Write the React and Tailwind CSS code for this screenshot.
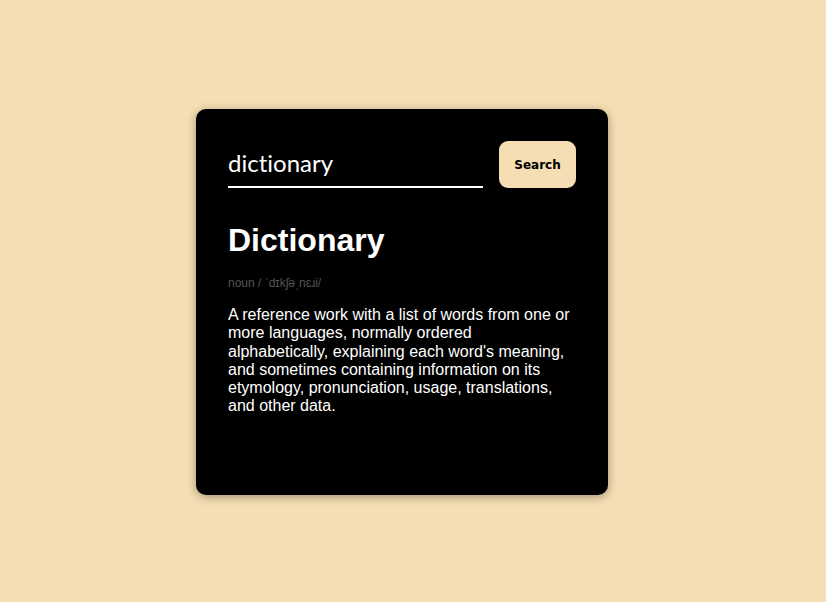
import { useState } from "react";

export default function App() {
  const [word, setWord] = useState("dictionary");

  return (
    <div className="min-h-screen w-full bg-[#f5deb3] flex items-center justify-center pr-[22px] pt-[2px]">
      <div className="w-[412px] h-[386px] bg-black rounded-[10px] shadow-[0_2px_10px_rgba(0,0,0,0.35)] px-8 pt-8">
        <div className="flex items-start gap-4">
          <input
            value={word}
            onChange={(e) => setWord(e.target.value)}
            className="w-[255px] h-[47px] bg-transparent text-white text-[24px] font-['Lato',sans-serif] [font-variant-ligatures:none] border-b-2 border-white outline-none pb-0.5"
          />
          <button className="w-[77px] h-[47px] rounded-[9px] bg-[#f5deb3] text-black text-[12px] font-bold font-['DejaVu_Sans',sans-serif]">
            Search
          </button>
        </div>

        <div className="font-['Liberation_Sans',Arial,sans-serif]">
          <h1 className="mt-[34px] text-[32px] font-bold text-white leading-[37px]">
            Dictionary
          </h1>
          <p className="mt-[17px] text-[12px] text-[#555] leading-[14px]">
            noun / ˈdɪkʃəˌnɛɹi/
          </p>
          <p className="mt-[16px] text-[16px] text-white leading-[18.3px]">
            A reference work with a list of words from one or more languages,
            normally ordered alphabetically, explaining each word's meaning,
            and sometimes containing information on its etymology,
            pronunciation, usage, translations, and other data.
          </p>
        </div>
      </div>
    </div>
  );
}
